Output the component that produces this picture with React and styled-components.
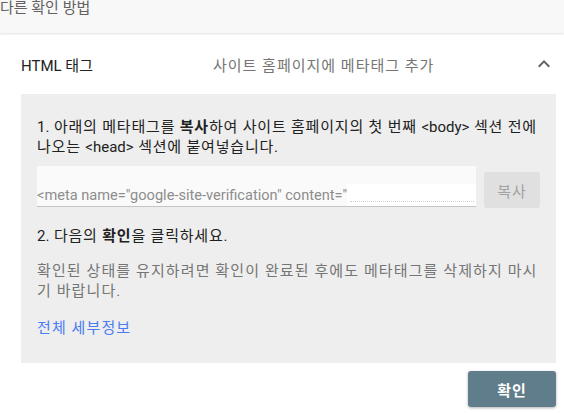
import styled, { createGlobalStyle } from "styled-components";

const GlobalStyle = createGlobalStyle`
  body {
    margin: 0;
    background: #ffffff;
    font-family: Roboto, "Noto Sans CJK KR", sans-serif;
    overflow: hidden;
  }
`;

const Page = styled.div`
  width: 564px;
  height: 413px;
  overflow: hidden;
`;

const TopBar = styled.div`
  height: 33px;
  background: #f8f8f8;
  box-shadow: 0 1px 2px rgba(0, 0, 0, 0.12);
  position: relative;
  z-index: 1;
`;

const TopTitle = styled.div`
  font-size: 15px;
  line-height: 16px;
  color: #616161;
  white-space: nowrap;
`;

const Card = styled.section`
  padding: 1px 8px 7px 21px;
`;

const Header = styled.div`
  height: 60px;
  display: grid;
  grid-template-columns: 192px 1fr 24px;
  align-items: center;
  font-size: 15px;
`;

const Title = styled.div`
  color: #202124;
`;

const Subtitle = styled.div`
  color: #757575;
  letter-spacing: 1px;
`;

const Chevron = styled.svg`
  width: 24px;
  height: 24px;
  fill: #5f6368;
  display: block;
`;

const Panel = styled.div`
  background: #eeeeee;
  padding: 23px 16px 25px 16px;
  font-size: 15px;
  line-height: 20px;
  letter-spacing: 1.1px;
`;

const Latin = styled.span`
  letter-spacing: 0;
`;

const Step = styled.p`
  margin: ${(p) => p.$top || 0}px 0 0;
  color: #212121;
  letter-spacing: 0.8px;
`;

const Note = styled.p`
  margin: 15px 0 0;
  color: #757575;
`;

const InputRow = styled.div`
  margin-top: 9px;
  display: flex;
  align-items: flex-end;
  gap: 8px;
`;

const Field = styled.div`
  flex: 1;
  height: 40px;
  border-bottom: 1px solid #c4c4c4;
  background: #fafafa;
  display: flex;
  align-items: flex-end;
  overflow: hidden;
  white-space: nowrap;
`;

const FieldText = styled.span`
  color: #8d8d8d;
  font-size: 14.6px;
  line-height: 20px;
  letter-spacing: 0;
  padding-bottom: 1px;
`;

const Redacted = styled.span`
  flex: 1;
  height: 22px;
  background: #ffffff;
  position: relative;
  &::after {
    content: "";
    position: absolute;
    left: 3px;
    right: 2px;
    bottom: 4px;
    border-bottom: 1px dotted #cfcfcf;
  }
`;

const CopyButton = styled.button`
  width: 56px;
  height: 36px;
  margin-bottom: -1px;
  border: none;
  border-radius: 3px;
  background: #e0e0e0;
  color: #a2a2a2;
  font-family: inherit;
  font-size: 15px;
  letter-spacing: 1px;
  padding: 0;
`;

const Link = styled.a`
  display: block;
  margin-top: 17px;
  color: #4a7cf3;
  text-decoration: none;
`;

const Footer = styled.div`
  display: flex;
  justify-content: flex-end;
  margin-top: 8px;
`;

const ConfirmButton = styled.button`
  width: 88px;
  height: 36px;
  border: none;
  border-radius: 3px;
  background: #607d8b;
  color: #ffffff;
  font-family: inherit;
  font-size: 15px;
  font-weight: 700;
  letter-spacing: 1px;
  box-shadow: 0 1px 3px rgba(0, 0, 0, 0.3);
  padding: 0;
`;

export default function App() {
  return (
    <Page>
      <GlobalStyle />
      <TopBar>
        <TopTitle>다른 확인 방법</TopTitle>
      </TopBar>
      <Card>
        <Header>
          <Title>HTML 태그</Title>
          <Subtitle>사이트 홈페이지에 메타태그 추가</Subtitle>
          <Chevron viewBox="0 0 24 24">
            <path d="M12 8l-6 6 1.41 1.41L12 10.83l4.59 4.58L18 14z" />
          </Chevron>
        </Header>
        <Panel>
          <Step>
            <Latin>1.</Latin> 아래의 메타태그를 <b>복사</b>하여 사이트 홈페이지의 첫 번째{" "}
            <Latin>&lt;body&gt;</Latin> 섹션 전에 나오는 <Latin>&lt;head&gt;</Latin> 섹션에
            붙여넣습니다.
          </Step>
          <InputRow>
            <Field>
              <FieldText>&lt;meta name="google-site-verification" content="</FieldText>
              <Redacted />
            </Field>
            <CopyButton>복사</CopyButton>
          </InputRow>
          <Step $top={19}>
            <Latin>2.</Latin> 다음의 <b>확인</b>을 클릭하세요.
          </Step>
          <Note>
            확인된 상태를 유지하려면 확인이 완료된 후에도 메타태그를 삭제하지 마시기 바랍니다.
          </Note>
          <Link href="#">전체 세부정보</Link>
        </Panel>
        <Footer>
          <ConfirmButton>확인</ConfirmButton>
        </Footer>
      </Card>
    </Page>
  );
}
